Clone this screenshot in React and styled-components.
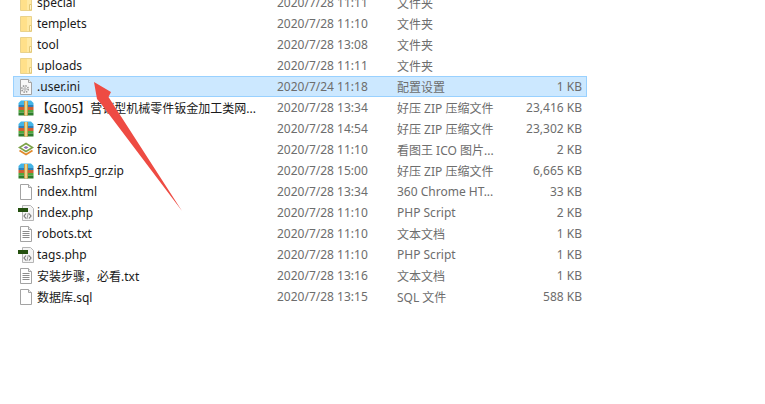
import React from 'react'
import styled, { createGlobalStyle } from 'styled-components'

const GlobalStyle = createGlobalStyle`
	html, body {
		margin: 0;
		padding: 0;
		background: #fff;
	}
`

const Page = styled.div`
	position: relative;
	width: 765px;
	height: 404px;
	overflow: hidden;
	background: #fff;
	font-family: 'Noto Sans', 'Noto Sans CJK SC', sans-serif;
	font-size: 12px;
`

const List = styled.div`
	display: flex;
	flex-direction: column;
	width: 574px;
	margin-left: 13px;
	margin-top: -8px;
`

const Row = styled.div`
	display: grid;
	grid-template-columns: 23px 240px 120px 96px 1fr;
	align-items: center;
	box-sizing: border-box;
	height: 21px;
	border: 1px solid ${p => (p.$selected ? '#99d1ff' : 'transparent')};
	background: ${p => (p.$selected ? '#cce8ff' : 'transparent')};
	white-space: nowrap;
`

const IconCell = styled.div`
	display: flex;
	justify-content: center;
	align-items: center;
	height: 16px;
`

const Name = styled.div`
	color: #1a1a1a;
	overflow: hidden;
`

const Meta = styled.div`
	color: #6d6d6d;
`

const Size = styled(Meta)`
	text-align: right;
	padding-right: 4px;
`

const ArrowLayer = styled.svg`
	position: absolute;
	left: 0;
	top: 0;
	pointer-events: none;
`

const FolderIcon = () => (
	<svg width="16" height="16" viewBox="0 0 16 16">
		<path d="M2.5 .5h11v15h-11z" fill="#ffe9a3" stroke="#e9d28c" />
		<path d="M3 1h6v14H3z" fill="#ffe08a" />
		<path d="M11.5 9.5h2v5.5h-2z" fill="#fff3c8" stroke="#e3c878" />
	</svg>
)

const BlankIcon = ({ lines }) => (
	<svg width="16" height="16" viewBox="0 0 16 16">
		<path d="M2.5 .5h8l3 3v12h-11z" fill="#fff" stroke="#a3a3a3" />
		<path d="M10.5 .5v3h3" fill="#eee" stroke="#a3a3a3" />
		{lines && <path d="M4.5 5.5h7M4.5 7.5h7M4.5 9.5h7M4.5 11.5h7" stroke="#8c8c8c" />}
	</svg>
)

const IniIcon = () => (
	<svg width="16" height="16" viewBox="0 0 16 16">
		<path d="M2.5 .5h8l3 3v12h-11z" fill="#f7f7f7" stroke="#a3a3a3" />
		<path d="M10.5 .5v3h3" fill="#eee" stroke="#a3a3a3" />
		<circle cx="7" cy="10" r="3.2" fill="none" stroke="#9a9a9a" strokeWidth="1.6" strokeDasharray="1.5 1" />
		<circle cx="7" cy="10" r="1.4" fill="#d0d0d0" stroke="#a8a8a8" strokeWidth=".6" />
	</svg>
)

const ZipIcon = () => (
	<svg width="16" height="16" viewBox="0 0 16 16">
		<path d="M3 .5h10l2.5 2.5v2H.5V3z" fill="#43b4e6" />
		<rect x=".5" y="5" width="15" height="2" fill="#2f7fb8" />
		<rect x=".5" y="7" width="15" height="3" fill="#cf5f33" />
		<rect x=".5" y="10" width="15" height="2.5" fill="#4fa83c" />
		<rect x=".5" y="12.5" width="15" height="3" fill="#2f7d2c" />
		<rect x="6" y="1" width="4" height="14.5" fill="#c99a4a" />
		<rect x="7" y="1" width="2" height="14.5" fill="#ecd48a" />
	</svg>
)

const IcoIcon = () => (
	<svg width="16" height="16" viewBox="0 0 16 16">
		<path d="M8 1.5l6.5 4-6.5 4-6.5-4z" fill="#fff" stroke="#7da34a" strokeWidth="1.6" />
		<path d="M1.5 8.5l6.5 4 6.5-4" fill="none" stroke="#e08a2c" strokeWidth="1.8" />
		<path d="M5.5 5.5l2.5-1.5 2.5 1.5-2.5 1.5z" fill="#8a6fb0" />
	</svg>
)

const PhpIcon = () => (
	<svg width="16" height="16" viewBox="0 0 16 16">
		<path d="M4.5 .5h8l3 3v12h-11z" fill="#f4f4f4" stroke="#b5b5b5" />
		<rect x="0" y="3" width="10" height="4" fill="#24500f" />
		<path d="M8 8.5l-2 2.5 2 2.5M11 8.5l2 2.5-2 2.5" fill="none" stroke="#777" strokeWidth="1.2" />
		<path d="M10.3 8l-1.4 6" stroke="#999" />
	</svg>
)

const icons = {
	folder: <FolderIcon />,
	ini: <IniIcon />,
	zip: <ZipIcon />,
	ico: <IcoIcon />,
	blank: <BlankIcon />,
	text: <BlankIcon lines />,
	php: <PhpIcon />,
}

const files = [
	{ icon: 'folder', name: 'special', date: '2020/7/28 11:11', type: '文件夹', size: '' },
	{ icon: 'folder', name: 'templets', date: '2020/7/28 11:10', type: '文件夹', size: '' },
	{ icon: 'folder', name: 'tool', date: '2020/7/28 13:08', type: '文件夹', size: '' },
	{ icon: 'folder', name: 'uploads', date: '2020/7/28 11:11', type: '文件夹', size: '' },
	{ icon: 'ini', name: '.user.ini', date: '2020/7/24 11:18', type: '配置设置', size: '1 KB', selected: true },
	{ icon: 'zip', name: '【G005】营销型机械零件钣金加工类网...', date: '2020/7/28 13:34', type: '好压 ZIP 压缩文件', size: '23,416 KB' },
	{ icon: 'zip', name: '789.zip', date: '2020/7/28 14:54', type: '好压 ZIP 压缩文件', size: '23,302 KB' },
	{ icon: 'ico', name: 'favicon.ico', date: '2020/7/28 11:10', type: '看图王 ICO 图片...', size: '2 KB' },
	{ icon: 'zip', name: 'flashfxp5_gr.zip', date: '2020/7/28 15:00', type: '好压 ZIP 压缩文件', size: '6,665 KB' },
	{ icon: 'blank', name: 'index.html', date: '2020/7/28 13:34', type: '360 Chrome HT...', size: '33 KB' },
	{ icon: 'php', name: 'index.php', date: '2020/7/28 11:10', type: 'PHP Script', size: '2 KB' },
	{ icon: 'text', name: 'robots.txt', date: '2020/7/28 11:10', type: '文本文档', size: '1 KB' },
	{ icon: 'php', name: 'tags.php', date: '2020/7/28 11:10', type: 'PHP Script', size: '1 KB' },
	{ icon: 'text', name: '安装步骤，必看.txt', date: '2020/7/28 13:16', type: '文本文档', size: '1 KB' },
	{ icon: 'blank', name: '数据库.sql', date: '2020/7/28 13:15', type: 'SQL 文件', size: '588 KB' },
]

const App = () => (
	<Page>
		<GlobalStyle />
		<List>
			{files.map(f => (
				<Row key={f.name} $selected={f.selected}>
					<IconCell>{icons[f.icon]}</IconCell>
					<Name>{f.name}</Name>
					<Meta>{f.date}</Meta>
					<Meta>{f.type}</Meta>
					<Size>{f.size}</Size>
				</Row>
			))}
		</List>
		<ArrowLayer width="765" height="404" viewBox="0 0 765 404">
			<path d="M94 82L111 92 108.5 97 182 211 102 105 97 99z" fill="#ee4b43" />
		</ArrowLayer>
	</Page>
)

export default App
